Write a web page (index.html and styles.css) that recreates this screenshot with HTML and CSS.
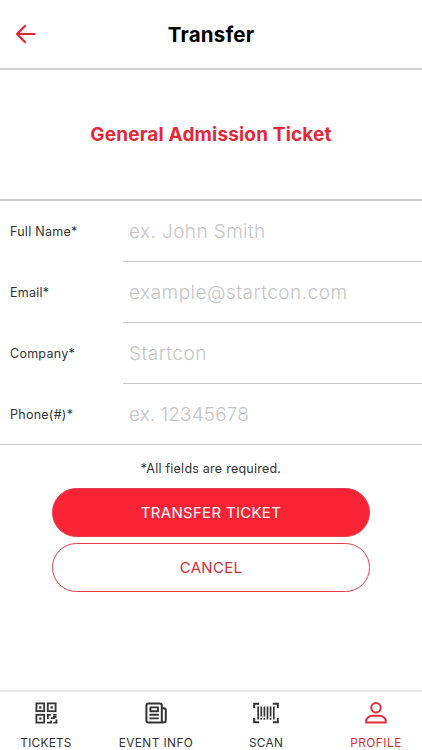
FILE: index.html
```html
<!DOCTYPE html>
<html lang="en">
<head>
<meta charset="utf-8">
<meta name="viewport" content="width=device-width">
<title>Transfer</title>
<link rel="stylesheet" href="styles.css">
</head>
<body>
<div class="app">
  <header class="header">
    <svg class="back" viewBox="0 0 20 20" aria-label="Back"><path d="M19.4 10H1.4M9.7 1.2L1 10l8.7 8.8"/></svg>
    <h1>Transfer</h1>
  </header>
  <section class="ticket"><h2>General Admission Ticket</h2></section>
  <main class="form">
    <div class="row"><div class="label">Full Name*</div><div class="field">ex. John Smith</div></div>
    <div class="row"><div class="label">Email*</div><div class="field wide">example@startcon.com</div></div>
    <div class="row"><div class="label">Company*</div><div class="field wide">Startcon</div></div>
    <div class="row last"><div class="label">Phone(#)*</div><div class="field digits">ex. 12345678</div></div>
  </main>
  <section class="actions">
    <p>*All fields are required.</p>
    <button class="btn primary">TRANSFER TICKET</button>
    <button class="btn outline">CANCEL</button>
  </section>
  <nav class="tabs">
    <a class="tab">
      <svg class="icon" viewBox="0 0 26 22"><g fill="none" stroke="currentColor" stroke-width="1.8"><rect x="3.4" y="1.4" width="7.8" height="7.8"/><rect x="14.8" y="1.4" width="7.8" height="7.8"/><rect x="3.4" y="12.8" width="7.8" height="7.8"/><path d="M14.8 17v-4.2h3M20.3 12.8h3.2M17.8 16.2h3v-1.4h2.7M14 20.6h4.2v-2M20.3 20.6h3.2v-3"/></g><path fill="currentColor" d="M6.2 4.2h2.2v2.2H6.2zM17.6 4.2h2.2v2.2h-2.2zM6.2 15.6h2.2v2.2H6.2z"/></svg>
      <span>TICKETS</span>
    </a>
    <a class="tab">
      <svg class="icon" viewBox="0 0 26 22"><g fill="none" stroke="currentColor" stroke-width="2" stroke-linejoin="round"><path d="M18.8 20.6H5.4a2 2 0 0 1-2-2V3.4a2 2 0 0 1 2-2h11.4a2 2 0 0 1 2 2v15.2a2 2 0 0 0 4 0V8.2a2 2 0 0 0-2-2h-2M18.8 20.6h2"/><path stroke-width="1.9" d="M7.4 5.4h7.6v3.8H7.4zM6.4 12.8h9.4M6.4 16.4h9.4"/></g></svg>
      <span>EVENT INFO</span>
    </a>
    <a class="tab">
      <svg class="icon" viewBox="0 0 26 22"><g fill="none" stroke="currentColor"><path stroke-width="2" d="M1.2 6V1.8h5M19.8 1.8h5V6M1.2 16v4.2h5M19.8 20.2h5V16"/><path stroke-width="1.7" d="M5.2 4.5v13M8.3 4.5v10M11.4 4.5v10M14.5 4.5v13M17.6 4.5v10M20.8 4.5v13M8.3 16v1.7M11.4 16v1.7M17.6 16v1.7"/></g></svg>
      <span>SCAN</span>
    </a>
    <a class="tab active">
      <svg class="icon" viewBox="0 0 26 22"><g fill="none" stroke="currentColor" stroke-width="2"><circle cx="13" cy="5.8" r="4.7"/><path stroke-linejoin="round" d="M3.2 20.6v-1.4c0-3.4 3.1-5.5 6.2-5.5h7.2c3.1 0 6.2 2.1 6.2 5.5v1.4z"/></g></svg>
      <span>PROFILE</span>
    </a>
  </nav>
</div>
</body>
</html>
```
FILE: styles.css
```css
* { box-sizing: border-box; }
body { margin: 0; background: #fff; color: #333; font-family: Inter, "Liberation Sans", sans-serif; white-space: nowrap; }
h1, h2, p { margin: 0; }
.app { height: 750px; display: flex; flex-direction: column; overflow: hidden; }

.header { height: 70px; flex: none; display: grid; grid-template-columns: 50px 1fr 50px; align-items: center; border-bottom: 2px solid #d2d2d2; }
.back { width: 20px; height: 20px; margin-left: 16px; fill: none; stroke: #df2436; stroke-width: 2.1; }
h1 { padding-top: 1px; text-align: center; font-size: 20.5px; line-height: 28px; font-weight: 700; letter-spacing: 0.2px; color: #000; }
.ticket { height: 131px; flex: none; display: flex; align-items: center; justify-content: center; border-bottom: 2px solid #cbcbcb; }
h2 { font-size: 19px; line-height: 26px; font-weight: 700; letter-spacing: 0.17px; color: #e42838; }

.form { flex: none; border-bottom: 1px solid #ccc; }
.row { height: 61px; display: grid; grid-template-columns: 123px 1fr; }
.row.last { height: 60px; }
.label, .field { display: flex; align-items: center; }
.label { padding-left: 10px; font-size: 12.5px; letter-spacing: 0.26px; }
.field { padding-left: 6px; border-bottom: 1px solid #c8c8c8; font-size: 19px; font-weight: 300; letter-spacing: 0.4px; color: #c6c6c6; }
.field.wide { letter-spacing: 0.5px; }
.field.digits { letter-spacing: 0.1px; }
.last .field { border-bottom: 0; }

.actions { flex: 1; display: flex; flex-direction: column; align-items: center; }
.actions p { height: 43px; padding-top: 15px; font-size: 12.5px; line-height: 17px; letter-spacing: 0.24px; }
.btn { width: 318px; height: 49px; padding: 0; border: 1px solid #e83a49; border-radius: 25px; font-family: inherit; font-size: 15px; font-weight: 400; letter-spacing: 0.3px; }
.primary { background: #f82435; color: #fff; }
.outline { margin-top: 6px; background: #fff; color: #e02b3b; }

.tabs { height: 60px; flex: none; display: grid; grid-template-columns: 101px 110px 110px 101px; border-top: 2px solid #e8e8e8; }
.tab { display: flex; flex-direction: column; align-items: center; padding-top: 10px; font-size: 11.8px; line-height: 14px; letter-spacing: 0.45px; color: #333; }
.tab:first-child { padding-right: 9px; letter-spacing: 0.25px; }
.tab:nth-child(3) { letter-spacing: 0.3px; }
.tab:last-child { padding-left: 9px; letter-spacing: 0.5px; }
.icon { width: 26px; height: 22px; margin-bottom: 12px; flex: none; }
.tab.active { color: #e02b3b; }
```
